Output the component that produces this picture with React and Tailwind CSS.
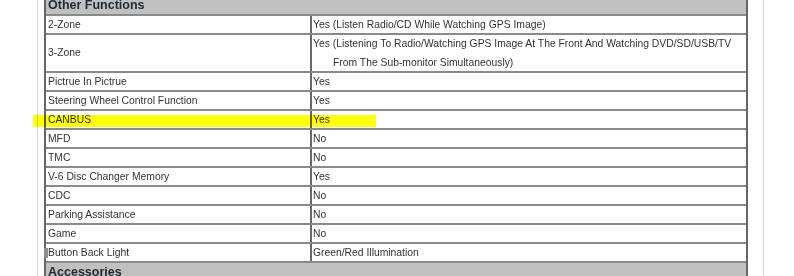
import React from "react";

const rows = [
  ["2-Zone", ["Yes (Listen Radio/CD While Watching GPS Image)"]],
  [
    "3-Zone",
    [
      "Yes (Listening To Radio/Watching GPS Image At The Front And Watching DVD/SD/USB/TV",
      "From The Sub-monitor Simultaneously)",
    ],
  ],
  ["Pictrue In Pictrue", ["Yes"]],
  ["Steering Wheel Control Function", ["Yes"]],
  ["CANBUS", ["Yes"]],
  ["MFD", ["No"]],
  ["TMC", ["No"]],
  ["V-6 Disc Changer Memory", ["Yes"]],
  ["CDC", ["No"]],
  ["Parking Assistance", ["No"]],
  ["Game", ["No"]],
  ["Button Back Light", ["Green/Red Illumination"]],
];

function Row({ label, value, marker }) {
  const multi = value.length > 1;
  return (
    <div className={`flex border-b-2 border-[#8a8a8a] ${multi ? "h-[38px]" : "h-[19px]"}`}>
      <div className="relative w-[266px] shrink-0 border-r-2 border-[#666666] pl-[2px] flex items-center">
        {marker && <span className="absolute left-[-2px] top-[4px] w-[4px] h-[10px] bg-[#8f8f8f]" />}
        <span>{label}</span>
      </div>
      <div className="flex-1 pl-[1px] flex flex-col justify-center leading-[19px]">
        {value.map((v, i) => (
          <div key={i} className={i > 0 ? "pl-[20px]" : ""}>
            {v}
          </div>
        ))}
      </div>
    </div>
  );
}

export default function App() {
  return (
    <div
      className="relative w-[794px] h-[276px] overflow-hidden bg-white flex text-[10.35px] text-[#333333]"
      style={{ fontFamily: '"Liberation Sans", Arial, sans-serif' }}
    >
      <div className="w-[37px] shrink-0" />
      <div className="w-px shrink-0 bg-[#d6d6d6]" />
      <div className="w-[6px] shrink-0" />
      <div className="w-[704px] shrink-0 border-x-2 border-[#666666] flex flex-col">
        <div className="h-[16px] shrink-0 bg-[#c0c0c0] border-b-2 border-[#8a8a8a] pl-[2px] flex items-end">
          <span className="text-[12.5px] font-bold text-[#1e2a36] leading-[16px] relative top-[-1px]">
            Other Functions
          </span>
        </div>
        {rows.map(([l, v]) => (
          <Row key={l} label={l} value={v} marker={l === "Button Back Light"} />
        ))}
        <div className="h-[20px] shrink-0 bg-[#c0c0c0] pl-[2px] pt-[1px]">
          <span className="text-[12.5px] font-bold text-[#1e2a36] leading-[16px]">Accessories</span>
        </div>
      </div>
      <div className="w-[15px] shrink-0" />
      <div className="w-px shrink-0 bg-[#d6d6d6]" />
      <div className="flex-1" />
      <div className="absolute left-[33px] top-[115px] w-[343px] h-[12px] bg-[#ffff10] mix-blend-multiply" />
    </div>
  );
}
